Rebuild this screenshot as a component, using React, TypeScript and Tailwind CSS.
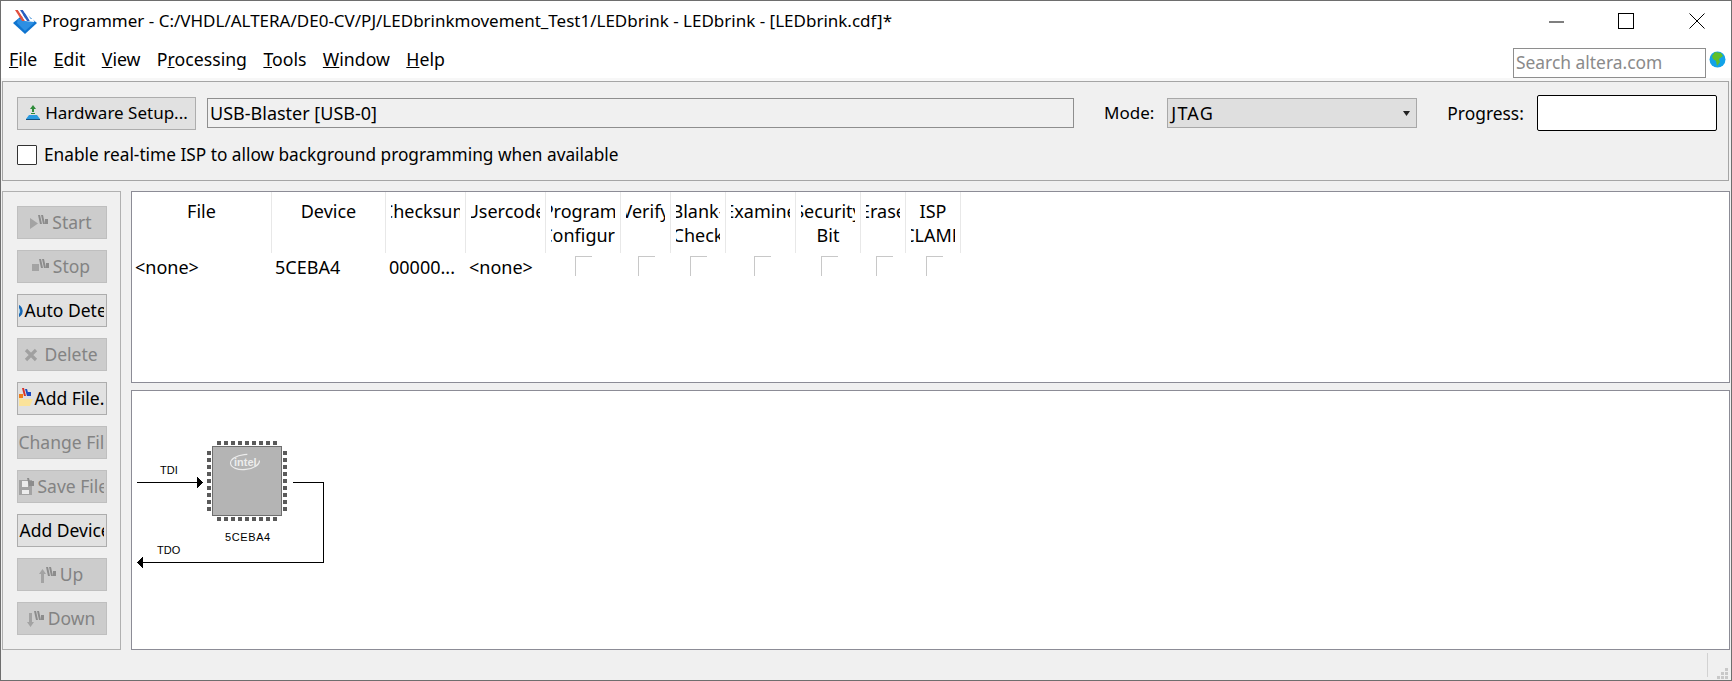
import React from "react";

const font = { fontFamily: '"Noto Sans", sans-serif' };

function AppIcon() {
  return (
    <svg width="26" height="26" viewBox="0 0 26 26" className="shrink-0">
      <path d="M13 5 L25 15 L13 26 L1 15 Z" fill="#0f74cf" />
      <path d="M6 11 L20 11 L22 15 L13 23 L5 15 Z" fill="#2d8fe3" />
      <path d="M10 10 L21 11 L22.5 14 L13 13 Z" fill="#ffffff" />
      <path d="M3 2 L6 2 L13 13 L10 13 Z" fill="#e2503f" />
      <path d="M6 2 L8 2 L15 13 L13 13 Z" fill="#ffffff" />
      <path d="M8 2 L11 2 L18 13 L15 13 Z" fill="#2a5fc0" />
      <path d="M11 2 L13 2 L20 13 L18 13 Z" fill="#ffffff" />
    </svg>
  );
}

function HwIcon() {
  return (
    <svg width="16" height="16" viewBox="0 0 16 16" className="shrink-0">
      <path d="M8 0 L11 4 L9 4 L9 7 L7 7 L7 4 L5 4 Z" fill="#2e8b3a" />
      <rect x="6" y="8" width="4" height="1" fill="#2e8b3a" />
      <path d="M4 10 H12 L15 14 H1 Z" fill="#2b9be0" />
      <rect x="1" y="14" width="14" height="1" fill="#14507f" />
    </svg>
  );
}

function Globe() {
  return (
    <svg width="17" height="17" viewBox="0 0 17 17" className="shrink-0">
      <circle cx="8.5" cy="8.5" r="8" fill="#12a2e8" />
      <path d="M6 1 L12 2 L14 5 L10 8 L11 11 L8 15 L7 10 L4 8 L3 5 Z" fill="#5fbf2a" />
    </svg>
  );
}

function Stripes({ c = "#8c8c8c" }: { c?: string }) {
  return (
    <svg width="10" height="11" viewBox="0 0 10 11" className="shrink-0 -mt-[5px]">
      <path d="M0 0 L2 0 L4 9 L2 9 Z" fill={c} />
      <path d="M3 0 L5 0 L7 9 L5 9 Z" fill={c} />
      <rect x="7" y="4" width="3" height="5" fill={c} />
    </svg>
  );
}

function ToolButton({ label, enabled, icon, gap = 4, pl = 1 }: { label: string; enabled?: boolean; icon?: React.ReactNode; gap?: number; pl?: number }) {
  return (
    <div
      className={
        "w-[90px] h-[33px] shrink-0 border overflow-hidden text-[17.5px] " +
        (enabled ? "bg-[#e1e1e1] border-[#adadad] text-black" : "bg-[#cccccc] border-[#bfbfbf] text-[#838383]")
      }
    >
      <div className="h-full w-[86px] flex items-center [justify-content:safe_center] overflow-hidden" style={{ paddingLeft: pl }}>
        <div className="flex items-center shrink-0 whitespace-nowrap" style={{ gap }}>
          {icon}
          <span>{label}</span>
        </div>
      </div>
    </div>
  );
}

const PlayIcon = (
  <div className="flex items-center shrink-0">
    <svg width="8" height="11" viewBox="0 0 8 11" className="mt-[2px]"><path d="M0 0 L8 5.5 L0 11 Z" fill="#a3a3a3" /></svg>
    <Stripes />
  </div>
);
const StopIcon = (
  <div className="flex items-center shrink-0">
    <div className="w-[7px] h-[7px] bg-[#a3a3a3] mt-[2px]" />
    <Stripes />
  </div>
);
const XIcon = (
  <svg width="14" height="14" viewBox="0 0 14 14" className="shrink-0 mr-[2px]">
    <path d="M2 2 L12 12 M12 2 L2 12" stroke="#a0a0a0" strokeWidth="3.2" />
  </svg>
);
const AutoIcon = (
  <div className="w-[4px] h-[14px] overflow-hidden shrink-0 flex justify-end">
    <svg width="14" height="14" viewBox="0 0 14 14" className="shrink-0">
      <circle cx="7" cy="7" r="5.5" fill="#9fd0f0" stroke="#1667b5" strokeWidth="2.5" />
    </svg>
  </div>
);
const AddFileIcon = (
  <svg width="14" height="18" viewBox="0 0 14 18" className="shrink-0 -mt-[4px]">
    <path d="M0 8 H3 V11 H14 L11 18 H0 Z" fill="#fbe39a" />
    <path d="M0 6 H4 V10 H0 Z" fill="#ef7d1a" />
    <path d="M3 0 L5 0 L7 8 L5 8 Z" fill="#d6322a" />
    <path d="M6 1 L8 1 L10 8 L8 8 Z" fill="#1b49c0" />
    <rect x="9" y="4" width="3" height="4" fill="#1b49c0" />
  </svg>
);
const SaveIcon = (
  <svg width="15" height="18" viewBox="0 0 15 18" className="shrink-0">
    <rect x="0" y="2" width="13" height="15" fill="#a3a3a3" />
    <rect x="3" y="3" width="6" height="6" fill="#ececec" />
    <rect x="3" y="12" width="7" height="4" fill="#ececec" />
    <path d="M8 0 L10 0 L12 8 L10 8 Z" fill="#8c8c8c" />
    <rect x="11" y="3" width="4" height="5" fill="#8c8c8c" />
  </svg>
);
const UpIcon = (
  <div className="flex items-center shrink-0">
    <svg width="7" height="14" viewBox="0 0 7 14" className="mt-[2px]"><path d="M3.5 0 L7 5 H5 V14 H2 V5 H0 Z" fill="#a3a3a3" /></svg>
    <Stripes />
  </div>
);
const DownIcon = (
  <div className="flex items-center shrink-0">
    <svg width="7" height="14" viewBox="0 0 7 14" className="mt-[2px]"><path d="M3.5 14 L7 9 H5 V0 H2 V9 H0 Z" fill="#a3a3a3" /></svg>
    <Stripes />
  </div>
);

const columns: { w: number; l1: string; l2?: string; box?: number; val?: string }[] = [
  { w: 140, l1: "File", val: "<none>" },
  { w: 114, l1: "Device", val: "5CEBA4" },
  { w: 80, l1: "Checksum", val: "00000..." },
  { w: 80, l1: "Usercode", val: "<none>" },
  { w: 75, l1: "Program/", l2: "Configure", box: 26 },
  { w: 50, l1: "Verify", box: 14 },
  { w: 55, l1: "Blank-", l2: "Check", box: 16 },
  { w: 70, l1: "Examine", box: 25 },
  { w: 65, l1: "Security", l2: "Bit", box: 22 },
  { w: 45, l1: "Erase", box: 12 },
  { w: 55, l1: "ISP", l2: "CLAMP", box: 17 },
];

function Table() {
  return (
    <div className="h-[192px] shrink-0 bg-white border border-[#8c8c96] overflow-hidden text-[18px] text-black">
      <div className="flex h-[61px]">
        {columns.map((c) => (
          <div key={c.l1} className="shrink-0 h-full border-r border-[#e8e8e8] px-[5px] pt-[7px]" style={{ width: c.w }}>
            <div className="w-full h-full overflow-hidden flex flex-col items-center leading-[24px]">
              <div className="whitespace-nowrap">{c.l1}</div>
              {c.l2 && <div className="whitespace-nowrap">{c.l2}</div>}
            </div>
          </div>
        ))}
      </div>
      <div className="flex h-[32px]">
        {columns.map((c) => (
          <div key={c.l1} className="shrink-0 h-full pt-[2px] pl-[3px] leading-[24px] whitespace-nowrap overflow-hidden" style={{ width: c.w }}>
            {c.val}
            {c.box !== undefined && (
              <div className="w-[17px] h-[20px] mt-[1px] border-l border-t border-[#c8c8c8]" style={{ marginLeft: c.box }} />
            )}
          </div>
        ))}
      </div>
    </div>
  );
}

function Diagram() {
  const top = Array.from({ length: 9 }, (_, i) => i);
  return (
    <svg width="210" height="142" viewBox="0 0 210 142" className="block shrink-0 mt-[37px]" shapeRendering="crispEdges">
      <g fontFamily="Liberation Sans, sans-serif" fontSize="11" fill="#000">
        <text x="28" y="46">TDI</text>
        <text x="25" y="126">TDO</text>
        <text x="93" y="113" letterSpacing="0.6">5CEBA4</text>
      </g>
      <rect x="80.5" y="18.5" width="69" height="69" fill="#b4b4b4" stroke="#6e6e6e" />
      {top.map((i) => (
        <g key={i} fill="#5a5a5a">
          <rect x={85 + i * 7} y="13" width="4" height="4" />
          <rect x={85 + i * 7} y="89" width="4" height="4" />
          <rect x="75" y={23 + i * 7} width="4" height="4" />
          <rect x="151" y={23 + i * 7} width="4" height="4" />
        </g>
      ))}
      <g shapeRendering="auto">
        <ellipse cx="113" cy="34" rx="14.5" ry="7.5" fill="none" stroke="#ececec" strokeWidth="1.2" strokeDasharray="56 16" transform="rotate(-6 113 34)" />
        <text x="102" y="38" fontFamily="Liberation Sans, sans-serif" fontSize="11" fontWeight="700" fill="#ececec">intel</text>
      </g>
      <path d="M5 54.5 H66" stroke="#000" fill="none" />
      <path d="M65 49 L71 54.5 L65 60 Z" fill="#000" />
      <path d="M161 54.5 H191.5 V134.5 H11" stroke="#000" fill="none" />
      <path d="M11 129 L5 134.5 L11 140 Z" fill="#000" />
    </svg>
  );
}

const menu: [React.ReactNode, number][] = [
  [<><span className="underline">F</span>ile</>, 0],
  [<><span className="underline">E</span>dit</>, 16.4],
  [<><span className="underline">V</span>iew</>, 16.4],
  [<>P<span className="underline">r</span>ocessing</>, 16.4],
  [<><span className="underline">T</span>ools</>, 16.4],
  [<><span className="underline">W</span>indow</>, 16.4],
  [<><span className="underline">H</span>elp</>, 16.4],
];

export default function App() {
  return (
    <div className="w-[1732px] h-[681px] bg-[#f0f0f0] border border-[#6e6e6e] flex flex-col overflow-hidden text-black text-[17px]" style={font}>
      <div className="bg-white shrink-0 h-[77px] flex flex-col">
        <div className="h-[40px] flex items-center pl-[11px] pr-[26px] shrink-0">
          <AppIcon />
          <span className="ml-[4px] text-[17px] whitespace-nowrap">Programmer - C:/VHDL/ALTERA/DE0-CV/PJ/LEDbrinkmovement_Test1/LEDbrink - LEDbrink - [LEDbrink.cdf]*</span>
          <div className="flex-1" />
          <svg width="15" height="2" viewBox="0 0 15 2" className="shrink-0 mt-[2px]"><rect width="15" height="1" y="0.5" fill="#000" /></svg>
          <svg width="16" height="16" viewBox="0 0 16 16" className="ml-[54px] shrink-0"><rect x="0.5" y="0.5" width="15" height="15" fill="none" stroke="#000" /></svg>
          <svg width="16" height="16" viewBox="0 0 16 16" className="ml-[55px] shrink-0"><path d="M0.5 0.5 L15.5 15.5 M15.5 0.5 L0.5 15.5" stroke="#000" /></svg>
        </div>
        <div className="flex-1 flex items-center pl-[8px] pr-[5px]">
          <div className="flex items-center h-[30px] text-[17.7px]">
            {menu.map(([node, m], i) => (
              <span key={i} className="whitespace-nowrap" style={{ marginLeft: m }}>{node}</span>
            ))}
          </div>
          <div className="flex-1" />
          <div className="w-[193px] h-[30px] mt-[6px] border border-[#8e8e8e] flex items-center pl-[2px] text-[#8a8a8a] text-[17.4px] whitespace-nowrap">Search altera.com</div>
          <div className="ml-[3px]"><Globe /></div>
        </div>
      </div>

      <div className="h-[3px] shrink-0 bg-[#f7f7f7]" />

      <div className="ml-[1px] mr-[2px] h-[100px] shrink-0 border border-[#a5a5a5] flex flex-col pl-[14px] pr-[11px]">
        <div className="flex items-center h-[50px] mt-[6px]">
          <div className="w-[179px] h-[33px] bg-[#e1e1e1] border border-[#adadad] flex items-center justify-center gap-[4px] shrink-0">
            <HwIcon />
            <span className="whitespace-nowrap">Hardware Setup...</span>
          </div>
          <div className="ml-[11px] w-[867px] h-[30px] border border-[#8e8e8e] flex items-center pl-[2px] shrink-0 text-[18px]">USB-Blaster [USB-0]</div>
          <span className="ml-[30px]">Mode:</span>
          <div className="ml-[13px] w-[250px] h-[30px] border border-[#a8a8a8] bg-[#dfdfdf] flex items-center justify-between pl-[3px] pr-[6px] text-[18px]">
            <span className="tracking-[1.2px]">JTAG</span>
            <svg width="7" height="5" viewBox="0 0 7 5"><path d="M0 0 H7 L3.5 5 Z" fill="#222" /></svg>
          </div>
          <span className="ml-[30px] whitespace-nowrap text-[17.4px]">Progress:</span>
          <div className="ml-[13px] w-[180px] h-[36px] bg-white border border-black rounded-[2px]" />
        </div>
        <div className="flex items-center mt-[4px]">
          <div className="w-[20px] h-[20px] bg-white border border-[#333] rounded-[1px] shrink-0" />
          <span className="ml-[7px] text-[17.25px] whitespace-nowrap">Enable real-time ISP to allow background programming when available</span>
        </div>
      </div>

      <div className="flex-1 flex min-h-0 pt-[10px] pl-[1px] pr-[1px]">
        <div className="w-[119px] shrink-0 border border-[#b0b0b0] flex flex-col items-center gap-[11px] pt-[14px]">
          <ToolButton label="Start" icon={PlayIcon} />
          <ToolButton label="Stop" icon={StopIcon} />
          <ToolButton label="Auto Detect" enabled icon={AutoIcon} gap={2} />
          <ToolButton label="Delete" icon={XIcon} />
          <ToolButton label="Add File..." enabled icon={AddFileIcon} gap={2} />
          <ToolButton label="Change File..." />
          <ToolButton label="Save File" icon={SaveIcon} gap={4} />
          <ToolButton label="Add Device..." enabled pl={2} />
          <ToolButton label="Up" icon={UpIcon} />
          <ToolButton label="Down" icon={DownIcon} />
        </div>
        <div className="flex-1 ml-[10px] flex flex-col gap-[7px] min-w-0">
          <Table />
          <div className="flex-1 bg-white border border-[#8c8c96] min-h-0 overflow-hidden">
            <Diagram />
          </div>
        </div>
      </div>

      <div className="h-[30px] shrink-0 flex justify-end items-stretch pr-[2px]">
        <div className="w-[1px] bg-[#d2d2d2] my-[3px] mr-[9px]" />
        <svg width="11" height="11" viewBox="0 0 11 11" className="self-end mb-[1px] mr-[1px]">
          {[[8,8],[4,8],[0,8],[8,4],[4,4],[8,0]].map(([x,y],i)=>(<rect key={i} x={x} y={y} width="3" height="3" fill="#c8c8c8" />))}
        </svg>
      </div>
    </div>
  );
}
